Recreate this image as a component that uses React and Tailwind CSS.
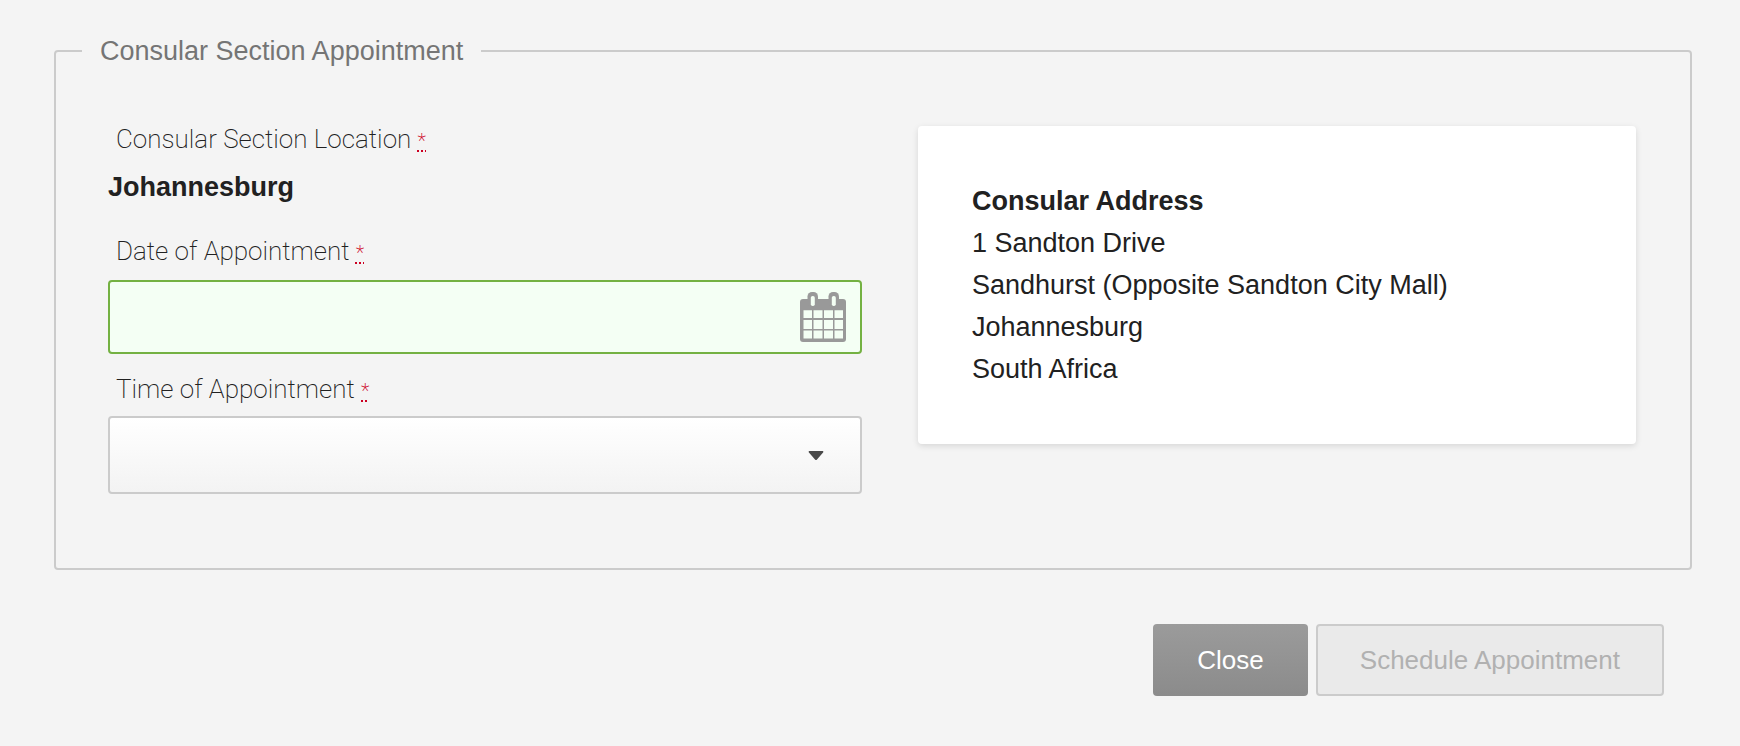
import React, { useState } from "react";

const App = () => {
  return (
    <main className="min-h-screen bg-[#f4f4f4] pt-[30px] pr-12 pb-12 pl-[54px] font-['Liberation_Sans',Arial,sans-serif] text-[27px] leading-[42px] text-[#212121]">
      <AppointmentForm />
    </main>
  );
};

const AppointmentForm = () => {
  const [date, setDate] = useState("");
  const [time, setTime] = useState("");

  return (
    <form onSubmit={(e) => e.preventDefault()}>
      <fieldset className="rounded-sm border-2 border-[#cbcbcb] px-[26px]">
        <legend className="px-[18px] text-[#757575]">Consular Section Appointment</legend>

        <div className="grid grid-cols-1 gap-14 pt-[46px] pr-7 pb-[74px] pl-[26px] md:grid-cols-[21fr_20fr]">
          <div>
            <p className="mb-1.5">
              <FieldName>Consular Section Location</FieldName>
            </p>
            <p className="mb-[22px] font-bold">Johannesburg</p>

            <label htmlFor="appointment-date" className="mb-2 block">
              <FieldName>Date of Appointment</FieldName>
            </label>
            <div className="relative mb-3.5">
              <input
                id="appointment-date"
                type="text"
                value={date}
                onChange={(e) => setDate(e.target.value)}
                className="block h-[74px] w-full rounded-sm border-2 border-[#74b142] bg-[#f4fff4] pr-20 pl-4 outline-none"
              />
              <button type="button" aria-label="Open calendar" className="absolute top-3 right-4">
                <CalendarIcon />
              </button>
            </div>

            <label htmlFor="appointment-time" className="mb-1.5 block">
              <FieldName>Time of Appointment</FieldName>
            </label>
            <div className="relative">
              <select
                id="appointment-time"
                value={time}
                onChange={(e) => setTime(e.target.value)}
                className="block h-[78px] w-full appearance-none rounded-sm border-2 border-[#cbcbcb] bg-gradient-to-b from-white to-[#f3f3f3] pr-20 pl-4 outline-none"
              >
                <option value=""></option>
              </select>
              <svg
                width="16"
                height="10"
                viewBox="0 0 16 10"
                className="pointer-events-none absolute top-[35px] right-[38px] fill-[#4a4a4a]"
              >
                <path d="M1.200 0h13.600q1.200 .7 .3 1.600l-6.100 6.800q-1 1-2 0L.9 1.600q-.9-.9 .3-1.600z" />
              </svg>
            </div>
          </div>

          <Address />
        </div>
      </fieldset>

      <div className="mt-[54px] mr-7 flex flex-wrap justify-end gap-2 text-[26px]">
        <button
          type="button"
          className="h-[72px] rounded-sm bg-gradient-to-b from-[#9b9b9b] to-[#8b8b8b] px-11 text-white"
        >
          Close
        </button>
        <button
          type="submit"
          disabled
          className="h-[72px] rounded-sm border-2 border-[#cbcbcb] bg-[#eaeaea] px-[42px] text-[#b1b1b1]"
        >
          Schedule Appointment
        </button>
      </div>
    </form>
  );
};

const FieldName = ({ children }) => (
  <span className="pl-2 font-['Roboto','Liberation_Sans',sans-serif] text-[26px] font-extralight">
    {children}{" "}
    <abbr className="text-[20px] leading-none text-[#cc0022] underline decoration-dotted decoration-2 underline-offset-2">
      *
    </abbr>
  </span>
);

const Address = () => (
  <address className="mt-2 self-start rounded-sm bg-white p-[54px] not-italic shadow-[0_2px_6px_rgba(0,0,0,0.12)]">
    <strong>Consular Address</strong>
    <br />
    1 Sandton Drive
    <br />
    Sandhurst (Opposite Sandton City Mall)
    <br />
    Johannesburg
    <br />
    South Africa
  </address>
);

const CalendarIcon = () => (
  <svg width="46" height="50" viewBox="0 0 46 50" fill="none">
    <rect y="7" width="46" height="43" rx="3" fill="#999999" />
    <rect x="7.500" width="10.500" height="16" rx="4.500" fill="#999999" />
    <rect x="28.500" width="10.500" height="16" rx="4.500" fill="#999999" />
    <rect x="10.800" y="4" width="4" height="10" rx="1.800" fill="#f4fff4" />
    <rect x="31.800" y="4" width="4" height="10" rx="1.800" fill="#f4fff4" />
    <path
      d="M3.500 18.300h8.500v7.700h-8.500zM13.500 18.300h9v7.700h-9zM24 18.300h9v7.700h-9zM34.500 18.300h8.500v7.700h-8.500zM3.500 28h8.500v9h-8.500zM13.500 28h9v9h-9zM24 28h9v9h-9zM34.500 28h8.500v9h-8.500zM3.500 38.500h8.500v8h-8.500zM13.500 38.500h9v8h-9zM24 38.500h9v8h-9zM34.500 38.500h8.500v8h-8.500z"
      fill="#f4fff4"
    />
  </svg>
);

export default App;
